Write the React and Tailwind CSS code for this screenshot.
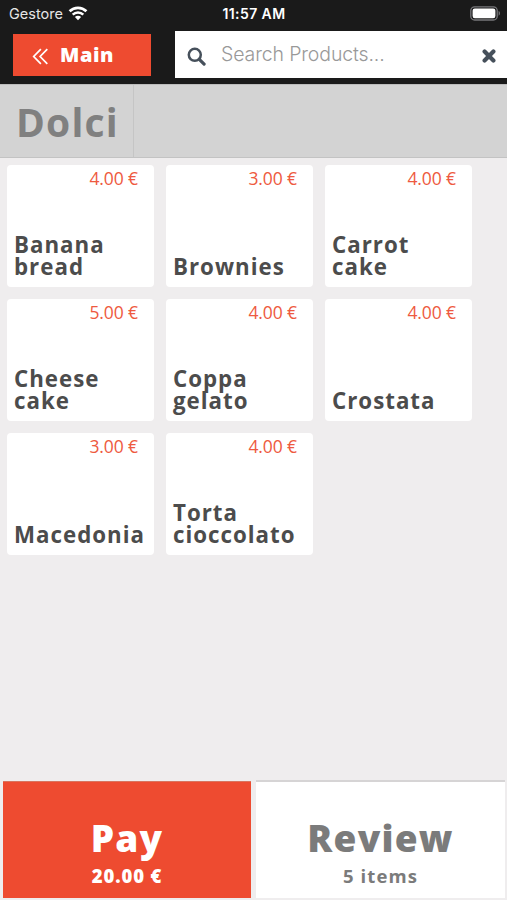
import React, { useState } from "react";

const PRODUCTS = [
  { name: "Banana bread", price: "4.00 €" },
  { name: "Brownies", price: "3.00 €" },
  { name: "Carrot cake", price: "4.00 €" },
  { name: "Cheese cake", price: "5.00 €" },
  { name: "Coppa gelato", price: "4.00 €" },
  { name: "Crostata", price: "4.00 €" },
  { name: "Macedonia", price: "3.00 €" },
  { name: "Torta cioccolato", price: "4.00 €" }
];

const WifiIcon = () => (
  <svg className="ml-[5px] mt-[-1px] h-[15px] w-[20px]" viewBox="0 0 20 15" fill="none" stroke="#fff">
    <path d="M1.6 5.3a12 12 0 0 1 16.8 0" strokeWidth="2.7" />
    <path d="M4.7 8.6a7.6 7.6 0 0 1 10.6 0" strokeWidth="2.5" />
    <path d="M10 14.2 6.9 11a4.4 4.4 0 0 1 6.2 0z" fill="#fff" stroke="none" />
  </svg>
);

const BatteryIcon = () => (
  <svg className="h-[15px] w-[31px]" viewBox="0 0 31 15" fill="none">
    <rect x="0.8" y="0.8" width="26.4" height="13.2" rx="3.8" stroke="#77777a" strokeWidth="1.3" />
    <rect x="2.6" y="2.6" width="22.8" height="9.6" rx="2.2" fill="#fff" />
    <path d="M28.6 5.1c1.8.7 1.8 4 0 4.7z" fill="#77777a" />
  </svg>
);

const StatusBar = () => (
  <div className="grid h-[31px] grid-cols-3 items-center pb-[4px] pl-[9px] pr-[6px] font-['Inter',sans-serif] text-white">
    <div className="flex items-center text-[14.5px]">
      <span className="text-[#e6e6e6]">Gestore</span>
      <WifiIcon />
    </div>
    <div className="pb-px pr-[2px] text-center text-[14px] font-semibold tracking-[0.4px]">11:57 AM</div>
    <div className="flex justify-end">
      <BatteryIcon />
    </div>
  </div>
);

const SearchField = () => {
  const [query, setQuery] = useState("");

  return (
    <div className="flex h-[47px] flex-1 items-center bg-white pl-[12px] pr-[11px]">
      <svg className="mt-[3px] h-[19px] w-[19px]" viewBox="0 0 19 19" fill="none" stroke="#46505b">
        <circle cx="7.8" cy="7.8" r="6" strokeWidth="2.5" />
        <path d="m12.3 12.3 4.8 4.8" strokeWidth="3.2" strokeLinecap="round" />
      </svg>
      <input
        className="ml-[15px] w-0 flex-1 pt-px font-['Inter',sans-serif] text-[19.5px] font-light tracking-[-0.13px] text-[#555] outline-none placeholder:text-[#999]"
        placeholder="Search Products..."
        value={query}
        onChange={e => setQuery(e.target.value)}
      />
      <button type="button" aria-label="Clear" onClick={() => setQuery("")}>
        <svg className="mt-[3px] h-[14px] w-[14px]" viewBox="0 0 14 14" fill="none" stroke="#46505b">
          <path d="m2.6 2.6 8.8 8.8m0-8.8-8.8 8.8" strokeWidth="4.2" strokeLinecap="round" />
        </svg>
      </button>
    </div>
  );
};

const ProductCard = ({ name, price }) => (
  <button
    type="button"
    className="flex h-[122px] w-[147px] flex-col justify-between rounded-[4px] bg-white pb-[9px] pl-[7px] text-left"
  >
    <span className="mr-[16px] mt-px self-end text-[17.5px] leading-[24px] tracking-[-0.1px] text-[#ee5a40]">
      {price}
    </span>
    <span className="text-[22.3px] font-bold leading-[22px] tracking-[1px] text-[#4c4c4c]">
      {name}
    </span>
  </button>
);

export default function App() {
  return (
    <div className="flex h-[900px] w-[507px] flex-col overflow-hidden bg-[#efedee] font-['Open_Sans',sans-serif]">
      {/* Header */}
      <header className="h-[84px] bg-[#1a1a1a]">
        <StatusBar />
        <div className="flex">
          <button
            type="button"
            className="ml-[13px] mr-[24px] mt-[3px] flex h-[42px] w-[138px] items-center bg-[#ee4b30] pl-[19px] text-white"
          >
            <svg className="mt-[2px] h-[17px] w-[17px]" viewBox="0 0 17 18" fill="none" stroke="#fff" strokeWidth="1.8">
              <path d="M8.9 1.2 1.3 9l7.6 7.8M15.7 1.2 8.1 9l7.6 7.8" />
            </svg>
            <span className="ml-[11px] text-[20px] font-extrabold tracking-[0.6px]">Main</span>
          </button>
          <SearchField />
        </div>
      </header>

      {/* Category path */}
      <nav className="flex h-[74px] border-b border-t border-b-[#c3c3c3] border-t-[#bcbcbc] bg-[#d3d3d3]">
        <div className="flex w-[134px] items-center border-r border-[#c5c5c5] pl-[16px] pt-[3px] text-[39px] font-bold tracking-[1.2px] text-[#808080]">
          Dolci
        </div>
      </nav>

      {/* Products */}
      <main className="flex-1 pl-[7px] pt-[7px]">
        <div className="grid grid-cols-[repeat(3,147px)] gap-x-[12px] gap-y-[12.2px]">
          {PRODUCTS.map(product => (
            <ProductCard key={product.name} {...product} />
          ))}
        </div>
      </main>

      {/* Footer */}
      <footer className="flex h-[120px] gap-[5px] pb-[2px] pl-[3px] pr-[2px]">
        <button
          type="button"
          className="mt-px flex w-[248px] flex-col items-center border-t border-[#d8755f] bg-[#ee4b30] pt-[31px] text-white"
        >
          <span className="text-[37px] font-extrabold leading-[50px] tracking-[1.2px]">Pay</span>
          <span className="text-[18.5px] font-extrabold leading-[26px] tracking-[0.9px]">20.00 €</span>
        </button>
        <button
          type="button"
          className="flex flex-1 flex-col items-center border-t-2 border-[#d6d4d5] bg-white pt-[31px] text-[#7b7b7b]"
        >
          <span className="text-[37px] font-extrabold leading-[50px] tracking-[1.2px]">Review</span>
          <span className="text-[18.5px] font-bold leading-[26px] tracking-[1.1px]">5 items</span>
        </button>
      </footer>
    </div>
  );
}
